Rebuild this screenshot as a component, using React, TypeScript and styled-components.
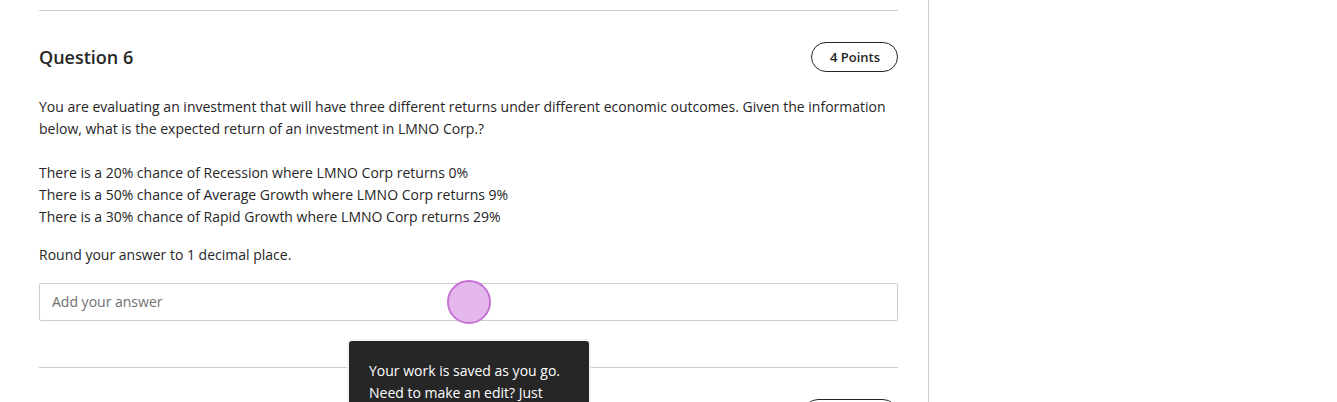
import React from "react";
import styled, { createGlobalStyle } from "styled-components";

const Global = createGlobalStyle`
  html, body { margin: 0; padding: 0; background: #ffffff; }
  body {
    font-family: "Open Sans", "Noto Sans", Arial, sans-serif;
    color: #262626;
    overflow: hidden;
    height: 402px;
  }
  * { box-sizing: border-box; }
`;

const Page = styled.div`
  display: flex;
  height: 402px;
`;

const Main = styled.main`
  position: relative;
  width: 929px;
  flex: none;
  border-right: 1px solid #cdcdcd;
  padding: 10px 30px 0 39px;
`;

const Sidebar = styled.aside`
  flex: 1;
`;

const Question = styled.section`
  border-top: 1px solid #cdcdcd;
  padding: 31px 0 46px;
`;

const Header = styled.div`
  display: flex;
  align-items: center;
  justify-content: space-between;
  height: 30px;
`;

const Title = styled.h2`
  margin: 0;
  font-size: 18px;
  font-weight: 600;
  line-height: 24px;
  color: #262626;
`;

const Pill = styled.span`
  display: inline-flex;
  align-items: center;
  height: 30px;
  padding: 0 17px 0 18px;
  border: 1px solid #262626;
  border-radius: 15px;
  font-size: 13px;
  font-weight: 600;
  color: #262626;
`;

const Para = styled.p<{ $gap?: number }>`
  margin: ${(p) => p.$gap ?? 0}px 0 0;
  font-size: 14px;
  line-height: 22px;
  color: #262626;
`;

const Input = styled.input`
  display: block;
  width: 100%;
  height: 38px;
  margin-top: 17px;
  padding: 0 12px 1px;
  border: 1px solid #cdcdcd;
  border-radius: 2px;
  font-family: inherit;
  font-size: 14px;
  color: #262626;
  outline: none;
  &::placeholder { color: #707070; }
`;

const Cursor = styled.div`
  position: absolute;
  left: 447px;
  top: 280px;
  width: 44px;
  height: 44px;
  border-radius: 50%;
  background: #e4b8ec;
  border: 2px solid #c572d4;
  pointer-events: none;
`;

const Tooltip = styled.div`
  position: absolute;
  left: 347px;
  top: 339px;
  width: 244px;
  background: #262626;
  border: 2px solid #f3f3f3;
  border-radius: 5px;
  padding: 19px 18px 18px 20px;
  color: #ffffff;
  font-size: 14px;
  line-height: 22px;
`;

export default function App() {
  return (
    <>
      <Global />
      <Page>
        <Main>
          <Question>
            <Header>
              <Title>Question 6</Title>
              <Pill>4 Points</Pill>
            </Header>
            <Para $gap={24}>
              You are evaluating an investment that will have three different returns under different
              economic outcomes. Given the information below, what is the expected return of an
              investment in LMNO Corp.?
            </Para>
            <Para $gap={22}>
              There is a 20% chance of Recession where LMNO Corp returns 0%
              <br />
              There is a 50% chance of Average Growth where LMNO Corp returns 9%
              <br />
              There is a 30% chance of Rapid Growth where LMNO Corp returns 29%
            </Para>
            <Para $gap={16}>Round your answer to 1 decimal place.</Para>
            <Input placeholder="Add your answer" />
          </Question>
          <Question>
            <Header>
              <Title>Question 7</Title>
              <Pill>10 Points</Pill>
            </Header>
          </Question>
          <Cursor />
          <Tooltip>
            Your work is saved as you go. Need to make an edit? Just come back to this question.
          </Tooltip>
        </Main>
        <Sidebar />
      </Page>
    </>
  );
}
